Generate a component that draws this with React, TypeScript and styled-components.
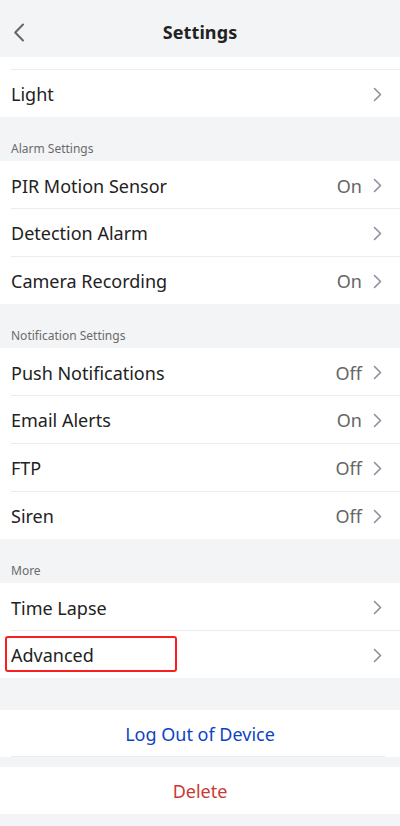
import React from "react";
import styled, { createGlobalStyle } from "styled-components";

const Global = createGlobalStyle`
  html, body { margin: 0; padding: 0; background: #f3f4f6; }
  body { font-family: "Noto Sans", "Inter", Arial, sans-serif; -webkit-font-smoothing: antialiased; }
  * { box-sizing: border-box; }
`;

const Page = styled.div`
  width: 400px;
  min-height: 826px;
  background: #f3f4f6;
  display: flex;
  flex-direction: column;
`;

const Header = styled.header`
  height: 57px;
  display: flex;
  align-items: center;
  justify-content: center;
  position: relative;
  background: #f3f4f6;
`;

const BackButton = styled.button`
  position: absolute;
  left: 8px;
  top: 17px;
  width: 22px;
  height: 30px;
  border: none;
  background: transparent;
  padding: 0;
  display: flex;
  align-items: center;
  justify-content: center;
`;

const Title = styled.h1`
  margin: 0;
  font-size: 18px;
  font-weight: 700;
  color: #222;
  letter-spacing: 0.1px;
  line-height: 24px;
  padding-top: 6px;
`;

const Group = styled.section`
  background: #fff;
  display: flex;
  flex-direction: column;
`;

const CutRow = styled.div`
  height: 12px;
`;

const SectionLabel = styled.div`
  height: 44px;
  display: flex;
  align-items: flex-end;
  padding: 0 11px 4px;
  font-size: 12px;
  line-height: 16px;
  color: #6b6b6b;
`;

const Row = styled.div<{ $first?: boolean }>`
  position: relative;
  height: ${(p) => (p.$first ? 47 : 48)}px;
  display: flex;
  align-items: center;
  padding: 2px 18px 0 11px;
  &::before {
    content: "";
    display: ${(p) => (p.$first ? "none" : "block")};
    position: absolute;
    left: 11px;
    right: 0;
    top: 0;
    height: 1px;
    background: #ececec;
  }
`;

const Label = styled.span`
  flex: 1;
  font-size: 18px;
  color: #222;
  line-height: 24px;
`;

const Value = styled.span`
  font-size: 18px;
  color: #666;
  line-height: 24px;
  margin-right: 11px;
`;

const Highlight = styled.div`
  position: absolute;
  left: 5px;
  top: 6px;
  width: 172px;
  height: 36px;
  border: 2px solid #fa1e1e;
  border-radius: 3px;
  pointer-events: none;
`;

const Gap = styled.div<{ $h: number }>`
  height: ${(p) => p.$h}px;
`;

const ActionButton = styled.button<{ $color: string; $divider?: boolean }>`
  position: relative;
  height: 47px;
  width: 100%;
  border: none;
  background: #fff;
  font-family: inherit;
  font-size: 18px;
  color: ${(p) => p.$color};
  display: flex;
  align-items: center;
  justify-content: center;
  padding: 0;
  &::after {
    content: "";
    display: ${(p) => (p.$divider ? "block" : "none")};
    position: absolute;
    left: 11px;
    right: 15px;
    bottom: 0;
    height: 1px;
    background: #ececec;
  }
`;

const Chevron = () => (
  <svg width="9" height="15" viewBox="0 0 9 15" fill="none">
    <path d="M1.5 1.5 L7.5 7.5 L1.5 13.5" stroke="#8e8e9c" strokeWidth="1.6" strokeLinecap="round" strokeLinejoin="round" />
  </svg>
);

const BackIcon = () => (
  <svg width="12" height="19" viewBox="0 0 12 19" fill="none">
    <path d="M10 1.5 L2.2 9.5 L10 17.5" stroke="#666" strokeWidth="2" strokeLinecap="round" strokeLinejoin="round" />
  </svg>
);

type Item = { label: string; value?: string; highlight?: boolean };

const SettingRow = ({ item, first }: { item: Item; first?: boolean }) => (
  <Row $first={first}>
    <Label>{item.label}</Label>
    {item.value && <Value>{item.value}</Value>}
    <Chevron />
    {item.highlight && <Highlight />}
  </Row>
);

const sections: { title: string; items: Item[] }[] = [
  {
    title: "Alarm Settings",
    items: [
      { label: "PIR Motion Sensor", value: "On" },
      { label: "Detection Alarm" },
      { label: "Camera Recording", value: "On" },
    ],
  },
  {
    title: "Notification Settings",
    items: [
      { label: "Push Notifications", value: "Off" },
      { label: "Email Alerts", value: "On" },
      { label: "FTP", value: "Off" },
      { label: "Siren", value: "Off" },
    ],
  },
  {
    title: "More",
    items: [{ label: "Time Lapse" }, { label: "Advanced", highlight: true }],
  },
];

export default function App() {
  return (
    <Page>
      <Global />
      <Header>
        <BackButton aria-label="Back">
          <BackIcon />
        </BackButton>
        <Title>Settings</Title>
      </Header>
      <Group>
        <CutRow />
        <SettingRow item={{ label: "Light" }} />
      </Group>
      {sections.map((s) => (
        <React.Fragment key={s.title}>
          <SectionLabel>{s.title}</SectionLabel>
          <Group>
            {s.items.map((it, i) => (
              <SettingRow key={it.label} item={it} first={i === 0} />
            ))}
          </Group>
        </React.Fragment>
      ))}
      <Gap $h={32} />
      <ActionButton $color="#0d44c2" $divider>
        Log Out of Device
      </ActionButton>
      <Gap $h={10} />
      <ActionButton $color="#c83a33">Delete</ActionButton>
    </Page>
  );
}
